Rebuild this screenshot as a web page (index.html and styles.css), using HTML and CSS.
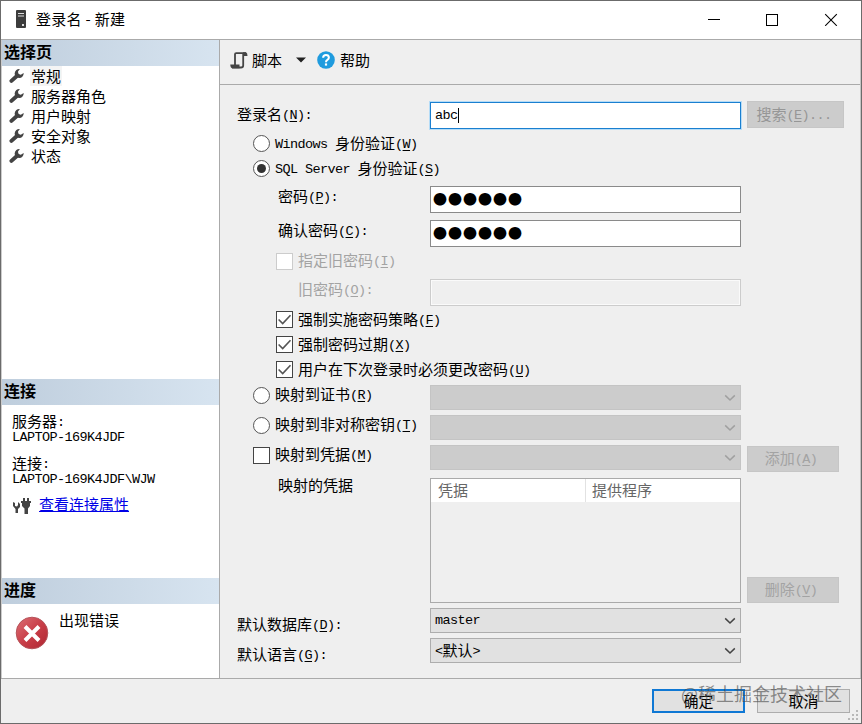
FILE: index.html
```html
<!DOCTYPE html>
<html lang="zh-CN">
<head>
    <meta charset="UTF-8">
    <meta name="viewport" content="width=device-width, initial-scale=1.0">
    <title>登录名 - 新建</title>
    <link rel="stylesheet" href="styles.css">
</head>
<body>
<svg width="0" height="0" class="defs">
    <symbol id="wrench" viewBox="0 0 16 16">
        <path d="M2.6 13.2L9 7.4" stroke="#444" stroke-width="4.2" stroke-linecap="round"/>
        <path d="M11.6 .6A4.8 4.8 0 1 0 15.6 4.8L12.6 6.6L10 5.9L9.6 3.2Z" fill="#444"/>
    </symbol>
    <symbol id="chevron" viewBox="0 0 12 8">
        <path d="M1.2 1.4L6 6L10.8 1.4" fill="none" stroke="currentColor" stroke-width="1.5"/>
    </symbol>
    <symbol id="check" viewBox="0 0 14 14">
        <path d="M1.5 7L5.3 10.8L12.6 3" fill="none" stroke="#555" stroke-width="1.5"/>
    </symbol>
</svg>
<div class="window">
    <header class="titlebar">
        <svg class="app-icon" width="10" height="18" viewBox="0 0 10 18">
            <rect width="10" height="18" rx="1" fill="#3c3c3c"/>
            <path d="M2 3.5H8M2 6H8" stroke="#ddd"/>
            <rect x="6" y="14" width="2" height="2" fill="#ddd"/>
        </svg>
        <span class="title">登录名 - 新建</span>
        <svg class="win-buttons" width="132" height="14" viewBox="0 0 132 14">
            <path d="M0 7.5H12" stroke="#000"/>
            <rect x="58.5" y="2.5" width="11" height="11" fill="none" stroke="#000"/>
            <path d="M117.2 2.2L128.8 13.8M128.8 2.2L117.2 13.8" stroke="#000" stroke-width="1.1"/>
        </svg>
    </header>

    <div class="main">
        <aside class="sidebar">
            <section class="pages">
                <h2>选择页</h2>
                <ul>
                    <li><svg><use href="#wrench"/></svg><span class="selected">常规</span></li>
                    <li><svg><use href="#wrench"/></svg><span>服务器角色</span></li>
                    <li><svg><use href="#wrench"/></svg><span>用户映射</span></li>
                    <li><svg><use href="#wrench"/></svg><span>安全对象</span></li>
                    <li><svg><use href="#wrench"/></svg><span>状态</span></li>
                </ul>
            </section>
            <section class="connection">
                <h2>连接</h2>
                <div class="info">
                    <p>服务器<i>:</i></p>
                    <p><i>LAPTOP-169K4JDF</i></p>
                    <p class="second">连接<i>:</i></p>
                    <p><i>LAPTOP-169K4JDF\WJW</i></p>
                </div>
                <div class="conn-link">
                    <svg width="18" height="17" viewBox="0 0 18 17" fill="#444">
                        <path d="M0 5L2 6V9L4 9.5L5 8V5L7 7V10L5 12V16H2.5V12L0 9Z"/>
                        <path d="M10 1H12V4H14V1H16V4H18V6H17V9L15 11.5V17H11.5V11.5L9 9V6H8V4H10Z"/>
                    </svg>
                    <a href="#">查看连接属性</a>
                </div>
            </section>
            <section class="progress">
                <h2>进度</h2>
                <div class="status">
                    <svg width="34" height="34" viewBox="0 0 34 34">
                        <defs>
                            <linearGradient id="red" x1="0" y1="0" x2="1" y2="1">
                                <stop offset="0" stop-color="#dc7076"/>
                                <stop offset=".5" stop-color="#c93e48"/>
                                <stop offset="1" stop-color="#ae2531"/>
                            </linearGradient>
                        </defs>
                        <circle cx="17" cy="17" r="15.8" fill="url(#red)" stroke="#b5535a"/>
                        <path d="M10 10.5L24 24.5M24 10.5L10 24.5" stroke="#fff" stroke-width="4"/>
                    </svg>
                    <span>出现错误</span>
                </div>
            </section>
        </aside>

        <div class="content">
            <div class="toolbar">
                <svg class="script-icon" width="18" height="17" viewBox="0 0 18 17">
                    <path d="M5 13V2.2Q5 1.2 6.2 1.2H16" fill="none" stroke="#444" stroke-width="1.8"/>
                    <path d="M13.2 1V13.5Q13.2 15.5 11 15.5H2" fill="none" stroke="#444" stroke-width="1.8"/>
                    <path d="M13 .3H16Q17.5 .8 17.5 4H13ZM.3 12.5H9.5V16.3H2.5Q.3 16 .3 12.5Z" fill="#444"/>
                </svg>
                <span>脚本</span>
                <svg class="caret" width="10" height="6" viewBox="0 0 10 6"><path d="M0 .5H10L5 5.5Z" fill="#222"/></svg>
                <svg class="help-icon" width="18" height="18" viewBox="0 0 18 18">
                    <circle cx="9" cy="9" r="8.8" fill="#1f9bde"/>
                    <path d="M6.1 6.8Q6.2 4.1 9 4.1T11.9 6.6Q11.9 8 10.4 8.9Q9 9.7 9 11.2" fill="none" stroke="#fff" stroke-width="2"/>
                    <rect x="7.9" y="12.4" width="2.2" height="2.2" fill="#fff"/>
                </svg>
                <span>帮助</span>
            </div>

            <form class="form">
                <div class="row login">
                    <label>登录名<i>(<u>N</u>):</i></label>
                    <div class="field focus"><i>abc</i><span class="cursor"></span></div>
                    <button type="button" class="btn disabled search">搜索<i>(<u>E</u>)...</i></button>
                </div>
                <div class="row windows-auth">
                    <span class="radio"></span><label><i>Windows </i>身份验证<i>(<u>W</u>)</i></label>
                </div>
                <div class="row sql-auth">
                    <span class="radio checked"></span><label><i>SQL Server </i>身份验证<i>(<u>S</u>)</i></label>
                </div>
                <div class="row password">
                    <label class="sub">密码<i>(<u>P</u>):</i></label>
                    <div class="field dots">●●●●●●</div>
                </div>
                <div class="row confirm">
                    <label class="sub">确认密码<i>(<u>C</u>):</i></label>
                    <div class="field dots">●●●●●●</div>
                </div>
                <div class="row old-check indent off">
                    <span class="box"></span><label>指定旧密码<i>(<u>I</u>)</i></label>
                </div>
                <div class="row old-password off">
                    <label class="sub deep">旧密码<i>(<u>O</u>):</i></label>
                    <div class="field"></div>
                </div>
                <div class="row policy indent">
                    <span class="box"><svg><use href="#check"/></svg></span><label>强制实施密码策略<i>(<u>F</u>)</i></label>
                </div>
                <div class="row expire indent">
                    <span class="box"><svg><use href="#check"/></svg></span><label>强制密码过期<i>(<u>X</u>)</i></label>
                </div>
                <div class="row must-change indent">
                    <span class="box"><svg><use href="#check"/></svg></span><label>用户在下次登录时必须更改密码<i>(<u>U</u>)</i></label>
                </div>
                <div class="row map cert">
                    <div class="option"><span class="radio"></span><label>映射到证书<i>(<u>R</u>)</i></label></div>
                    <div class="combo disabled"><svg><use href="#chevron"/></svg></div>
                </div>
                <div class="row map">
                    <div class="option"><span class="radio"></span><label>映射到非对称密钥<i>(<u>T</u>)</i></label></div>
                    <div class="combo disabled"><svg><use href="#chevron"/></svg></div>
                </div>
                <div class="row map">
                    <div class="option"><span class="box"></span><label>映射到凭据<i>(<u>M</u>)</i></label></div>
                    <div class="combo disabled"><svg><use href="#chevron"/></svg></div>
                    <button type="button" class="btn disabled add">添加<i>(<u>A</u>)</i></button>
                </div>
                <div class="row credentials">
                    <label class="sub">映射的凭据</label>
                    <div class="list">
                        <div class="list-head"><span>凭据</span><span>提供程序</span></div>
                    </div>
                    <button type="button" class="btn disabled remove">删除<i>(<u>V</u>)</i></button>
                </div>
                <div class="row default">
                    <label>默认数据库<i>(<u>D</u>):</i></label>
                    <div class="combo"><i>master</i><svg><use href="#chevron"/></svg></div>
                </div>
                <div class="row default">
                    <label>默认语言<i>(<u>G</u>):</i></label>
                    <div class="combo"><span><i>&lt;</i>默认<i>&gt;</i></span><svg><use href="#chevron"/></svg></div>
                </div>
            </form>
        </div>
    </div>

    <footer>
        <button type="button" class="btn ok">确定</button>
        <button type="button" class="btn cancel">取消</button>
        <svg class="grip" width="11" height="11" viewBox="0 0 11 11" fill="#b8b8b8">
            <path d="M8 0h2v2h-2zM4 4h2v2h-2zM8 4h2v2h-2zM0 8h2v2h-2zM4 8h2v2h-2zM8 8h2v2h-2z"/>
        </svg>
        <span class="watermark">@稀土掘金技术社区</span>
    </footer>
</div>
</body>
</html>
```
FILE: styles.css
```css
* {
    box-sizing: border-box;
}
body {
    margin: 0;
    font-family: "Noto Sans CJK SC", sans-serif;
    font-size: 15px;
    line-height: 20px;
    color: #000;
    background-color: #efefef;
}
/* half-width latin text, two letters per full character */
i {
    font-family: "Liberation Mono", monospace;
    font-size: 13.5px;
    letter-spacing: -0.6px;
    line-height: 1;
    font-style: normal;
    vertical-align: 1px;
    white-space: pre;
}
u {
    text-underline-offset: 2px;
}
.defs {
    position: absolute;
}
.window {
    position: relative;
    display: flex;
    flex-direction: column;
    height: 724px;
    border: 1px solid #6b6b6b;
    overflow: hidden;
}
.titlebar {
    display: flex;
    align-items: center;
    height: 39px;
    padding: 0 23px 2px 15px;
    background-color: #fff;
    border-bottom: 1px solid #aaa;
}
.title {
    margin-left: 10px;
    letter-spacing: 0.3px;
}
.win-buttons {
    margin-left: auto;
    margin-right: -2px;
}
.main {
    display: flex;
    height: 639px;
    border-bottom: 1px solid #aaa;
}

/* left side */
.sidebar {
    width: 219px;
    background-color: #fff;
    border-left: 1px solid #ccc;
    border-right: 1px solid #aaa;
}
.sidebar h2 {
    margin: 0;
    height: 26px;
    padding-left: 2px;
    font-size: 16px;
    line-height: 22px;
    background: linear-gradient(to right, #bfcedd, #d7e4f0);
}
.pages {
    height: 339px;
}
.pages ul {
    list-style: none;
    margin: 0;
    padding: 0 0 0 7px;
}
.pages li {
    display: flex;
    height: 20px;
}
.pages li svg {
    width: 15px;
    height: 16px;
    margin: 2px 6px 0 0;
}
.pages li span {
    padding: 0 1px;
}
.selected {
    background-color: #f4f4f4;
}
.connection {
    height: 199px;
}
.info {
    padding: 7px 0 0 10px;
    line-height: 18px;
}
.info p {
    margin: 0;
    height: 15px;
}
.info .second {
    margin-top: 12px;
}
.conn-link {
    display: flex;
    align-items: center;
    margin: 10px 0 0 11px;
}
.conn-link svg {
    margin: 3px 8px 0 0;
}
.conn-link a {
    color: #0000e6;
}
.status {
    display: flex;
    padding: 12px 0 0 13px;
}
.status span {
    margin: -6px 0 0 10px;
}

/* right side */
.content {
    flex: 1;
    border-right: 1px solid #c4c4c4;
}
.toolbar {
    display: flex;
    align-items: center;
    height: 45px;
    padding: 0 0 4px 10px;
    border-bottom: 1px solid #aaa;
}
.script-icon {
    margin-right: 4px;
}
.caret {
    margin: 0 11px 0 14px;
}
.help-icon {
    margin-right: 5px;
}
.form {
    padding: 17px 0 0 17px;
}
.row {
    display: flex;
    align-items: center;
    height: 27px;
}
.row label {
    margin-bottom: 2px;
}
.row > label:first-child, .option {
    width: 193px;
    flex: none;
}
.row > .sub:first-child {
    padding-left: 41px;
}
.row > .deep:first-child {
    padding-left: 61px;
}
.row > .radio, .option {
    margin-left: 16px;
}
.option {
    display: flex;
    align-items: center;
    width: 177px;
    padding-bottom: 5px;
}
.indent {
    padding-left: 39px;
}
.off label {
    color: #a3a3a3;
}
.login label {
    padding-bottom: 1px;
}
.windows-auth {
    height: 29px;
}
.sql-auth {
    height: 20px;
}
.sql-auth label {
    margin-bottom: 0;
}
.password {
    margin: 8px 0 7px;
}
.password label, .confirm label, .old-password label {
    padding-bottom: 5px;
}
.old-check {
    height: 28px;
}
.old-password {
    margin: 4px 0;
}
.policy, .must-change {
    height: 19px;
}
.expire {
    height: 31px;
}
.map {
    height: 25px;
    margin-bottom: 5px;
}
.cert {
    margin-top: 6px;
}
.credentials {
    height: 125px;
    margin: 8px 0 5px;
    align-items: flex-start;
}
.credentials label {
    margin-top: -3px;
}
.default {
    height: 25px;
    margin-bottom: 5px;
}
.default label {
    padding-top: 9px;
}

.radio {
    display: flex;
    flex: none;
    width: 17px;
    height: 17px;
    margin-right: 5px;
    border: 1px solid #555;
    border-radius: 50%;
    background-color: #fff;
}
.checked::after {
    content: "";
    width: 9px;
    height: 9px;
    margin: 3px;
    border-radius: 50%;
    background-color: #333;
}
.box {
    flex: none;
    width: 17px;
    height: 17px;
    margin-right: 5px;
    border: 1px solid #444;
    background-color: #fff;
}
.box svg {
    display: block;
    width: 15px;
    height: 15px;
}
.off .box {
    border-color: #ccc;
}
.field {
    display: flex;
    align-items: center;
    width: 311px;
    height: 27px;
    padding-left: 4px;
    border: 1px solid #8a8a8a;
    background-color: #fff;
}
.off .field {
    border-color: #ccc;
    background-color: #efefef;
    box-shadow: inset 0 0 0 1px #fafafa;
}
.focus {
    border-color: #1a7fd0;
    box-shadow: 0 0 0 1px #b5dcf7;
}
.cursor {
    width: 1px;
    height: 15px;
    background-color: #000;
}
.dots {
    padding: 0 0 4px 2px;
    font-size: 14px;
    letter-spacing: 1px;
}
.combo {
    display: flex;
    align-items: center;
    justify-content: space-between;
    width: 311px;
    height: 25px;
    padding: 0 4px 0 4px;
    color: #000;
    background-color: #e1e1e1;
    border: 1px solid #adadad;
}
.combo span {
    margin-bottom: 2px;
}
.combo svg {
    width: 12px;
    height: 8px;
    margin-left: auto;
    color: #444;
}
.combo.disabled {
    background-color: #ccc;
    border-color: #c4c4c4;
}
.combo.disabled svg {
    color: #a0a0a0;
}
.list {
    width: 311px;
    height: 125px;
    border: 1px solid #aaa;
}
.list-head {
    display: flex;
    height: 23px;
    line-height: 22px;
    color: #666;
    background-color: #fff;
}
.list-head span {
    padding-left: 6px;
}
.list-head span:first-child {
    width: 155px;
    padding-left: 7px;
    border-right: 1px solid #e2e2e2;
}
.btn {
    flex: none;
    width: 92px;
    height: 26px;
    padding: 0;
    font-family: inherit;
    font-size: 15px;
    line-height: 20px;
    color: #000;
    background-color: #e1e1e1;
    border: 1px solid #adadad;
}
.btn.disabled {
    margin-left: 6px;
    color: #969696;
    background-color: #ccc;
    border-color: #c6c6c6;
}
.btn.search {
    width: 97px;
    height: 27px;
    margin-top: -2px;
    padding: 0 3px 1px 0;
}
.btn.add {
    margin-top: 2px;
    padding: 0 4px 2px 0;
    color: #a3a3a3;
}
.btn.remove {
    align-self: flex-end;
    padding: 0 4px 3px 0;
    color: #a3a3a3;
}

footer {
    position: relative;
    display: flex;
    justify-content: flex-end;
    gap: 12px;
    padding: 10px 11px 0 0;
}
.btn.ok {
    width: 93px;
    height: 24px;
    border: 2px solid #0f78d4;
}
.btn.cancel {
    width: 93px;
    height: 24px;
}
.grip {
    position: absolute;
    right: 2px;
    top: 31px;
}
.watermark {
    position: absolute;
    right: 19px;
    top: 3px;
    font-size: 18px;
    line-height: 22px;
    color: rgba(70, 70, 70, 0.6);
    white-space: nowrap;
}
```
